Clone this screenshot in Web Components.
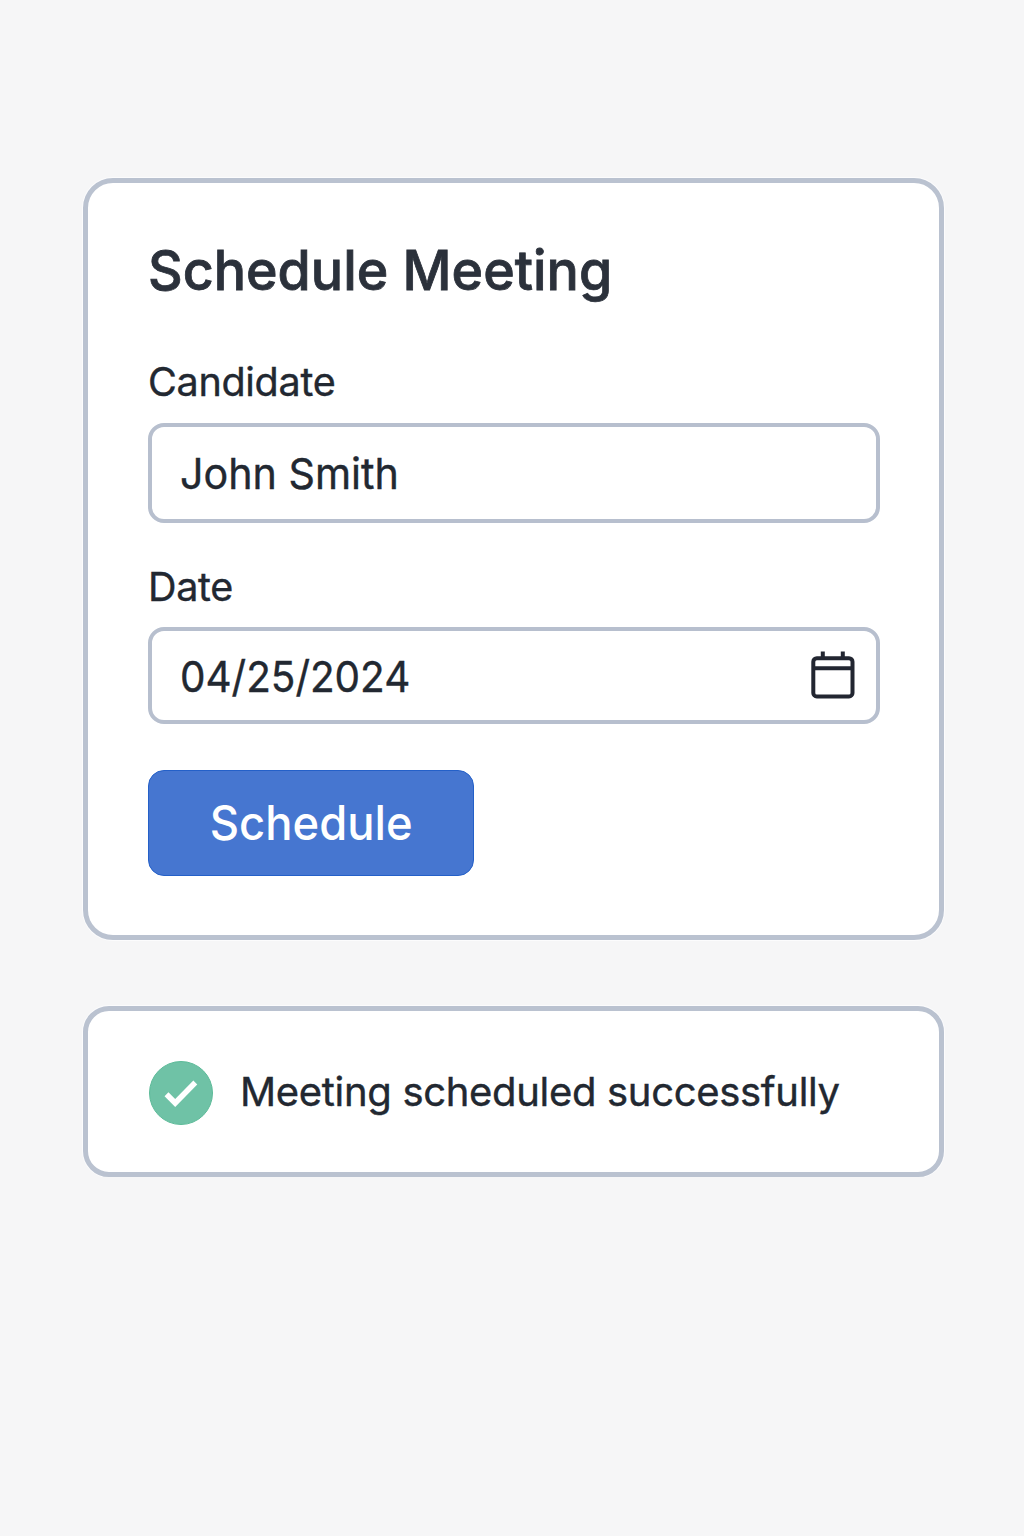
<!DOCTYPE html>
<html lang="en">
<head>
<meta charset="utf-8">
<title>Schedule Meeting</title>
<style>
body { margin: 0; background: #f6f6f7; font-family: Inter, "Liberation Sans", sans-serif; color: #222831; }
</style>
</head>
<body>
<schedule-page></schedule-page>
<script>
class SurfaceCard extends HTMLElement {
  constructor() {
    super();
    this.attachShadow({ mode: 'open' }).innerHTML = `
      <style>
        :host { display: block; box-sizing: border-box; border: 5px solid #bac2d0; border-radius: var(--card-radius, 30px); background: #fff; box-shadow: 0 0 0 1px #fcfcfd; }
      </style><slot></slot>`;
  }
}
customElements.define('surface-card', SurfaceCard);

class CalendarIcon extends HTMLElement {
  constructor() {
    super();
    this.attachShadow({ mode: 'open' }).innerHTML = `
      <style>:host { display: block; width: 46px; height: 50px; } svg { display: block; }</style>
      <svg width="46" height="50" viewBox="0 0 46 50" fill="none" stroke="#222631" stroke-width="4">
        <rect x="2.3" y="7.2" width="39.2" height="38.2" rx="3.5"/>
        <path d="M2.3 17.3H41.5M11.8 0.4V8M31.8 0.4V8"/>
      </svg>`;
  }
}
customElements.define('calendar-icon', CalendarIcon);

class FormField extends HTMLElement {
  constructor() {
    super();
    this.attachShadow({ mode: 'open' }).innerHTML = `
      <style>
        :host { display: flex; flex-direction: column; -webkit-text-stroke: 0.4px currentColor; }
        .label { padding-left: 0.5px; font-size: 39.5px; line-height: 48px; letter-spacing: -0.3px; white-space: nowrap; }
        .box { box-sizing: border-box; display: flex; align-items: center; justify-content: space-between; height: var(--box-height, 100px); margin-top: var(--label-gap, 17px); padding: 0 19px 0 28.5px; border: 4px solid #b7bfce; border-radius: 16px; }
        .value { font-size: 43px; line-height: 50px; white-space: nowrap; transform: scaleX(var(--value-stretch, 0.958)); transform-origin: left; }
      </style>
      <div class="label"><slot name="label"></slot></div>
      <div class="box"><div class="value"><slot></slot></div><slot name="icon"></slot></div>`;
  }
}
customElements.define('form-field', FormField);

class PrimaryButton extends HTMLElement {
  constructor() {
    super();
    this.attachShadow({ mode: 'open' }).innerHTML = `
      <style>
        :host { display: block; width: 326px; height: 106px; }
        button { box-sizing: border-box; width: 100%; height: 100%; padding: 0 0 1px 2px; border: 1px solid #2460c8; border-radius: 16px; background: #4676d0; color: #fff; font: 500 47.5px/56px Inter, "Liberation Sans", sans-serif; }
        span { display: inline-block; transform: scaleX(0.955); }
      </style>
      <button type="button"><span><slot></slot></span></button>`;
  }
}
customElements.define('primary-button', PrimaryButton);

class StatusMessage extends HTMLElement {
  constructor() {
    super();
    this.attachShadow({ mode: 'open' }).innerHTML = `
      <style>
        :host { display: flex; align-items: center; gap: 27px; font-size: 40px; line-height: 48px; letter-spacing: -0.32px; white-space: nowrap; -webkit-text-stroke: 0.4px currentColor; }
        svg { display: block; flex: none; }
        span { padding-bottom: 2px; }
      </style>
      <svg width="64" height="64" viewBox="0 0 64 64"><circle cx="32" cy="32" r="31.5" fill="#6fc2a6" stroke="#5dbb99"/><path d="M17.5 33.2L26.2 42L46.3 21.5" fill="none" stroke="#fff" stroke-width="5.5"/></svg>
      <span><slot></slot></span>`;
  }
}
customElements.define('status-message', StatusMessage);

class SchedulePage extends HTMLElement {
  constructor() {
    super();
    this.attachShadow({ mode: 'open' }).innerHTML = `
      <style>
        :host { display: flex; flex-direction: column; gap: 66px; padding: 178px 80px 0 83px; }
        .form { height: 762px; padding: 54px 59px 0 59.5px; }
        h1 { margin: 0; font-size: 55px; line-height: 66px; font-weight: 500; color: #2b313b; -webkit-text-stroke: 0.8px currentColor; white-space: nowrap; }
        h1 span { display: inline-block; transform: scaleX(0.977); transform-origin: left; }
        .candidate { margin-top: 55px; }
        .date { margin-top: 40px; --label-gap: 16px; --box-height: 97px; --value-stretch: 0.94; }
        primary-button { margin-top: 46px; }
        .status { --card-radius: 26px; height: 171px; padding: 49.5px 61px; }
      </style>
      <surface-card class="form">
        <h1><span>Schedule Meeting</span></h1>
        <form-field class="candidate"><span slot="label">Candidate</span><span>John Smith</span></form-field>
        <form-field class="date"><span slot="label">Date</span><span>04/25/2024</span><calendar-icon slot="icon"></calendar-icon></form-field>
        <primary-button>Schedule</primary-button>
      </surface-card>
      <surface-card class="status"><status-message>Meeting scheduled successfully</status-message></surface-card>`;
  }
}
customElements.define('schedule-page', SchedulePage);
</script>
</body>
</html>
